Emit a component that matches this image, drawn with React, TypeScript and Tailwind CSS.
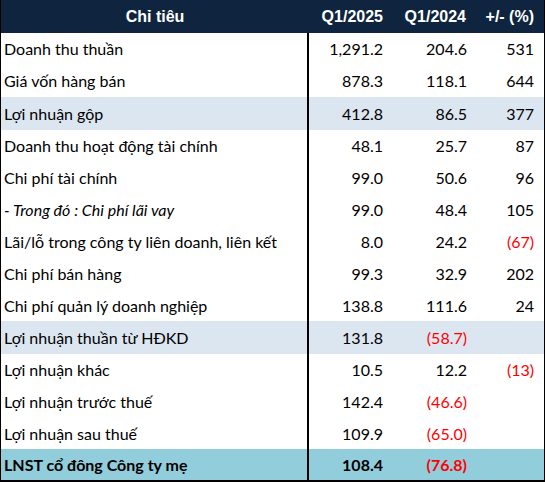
type Row = {
  label: string;
  q25: string;
  q24: string;
  pct: string;
  h: string;
  tone?: "band" | "total";
  italic?: boolean;
};

const rows: Row[] = [
  { label: "Doanh thu thuần", q25: "1,291.2", q24: "204.6", pct: "531", h: "h-[32px]" },
  { label: "Giá vốn hàng bán", q25: "878.3", q24: "118.1", pct: "644", h: "h-[32px]" },
  { label: "Lợi nhuận gộp", q25: "412.8", q24: "86.5", pct: "377", h: "h-[33px]", tone: "band" },
  { label: "Doanh thu hoạt động tài chính", q25: "48.1", q24: "25.7", pct: "87", h: "h-[32px]" },
  { label: "Chi phí tài chính", q25: "99.0", q24: "50.6", pct: "96", h: "h-[32px]" },
  { label: "- Trong đó : Chi phí lãi vay", q25: "99.0", q24: "48.4", pct: "105", h: "h-[32px]", italic: true },
  { label: "Lãi/lỗ trong công ty liên doanh, liên kết", q25: "8.0", q24: "24.2", pct: "(67)", h: "h-[32px]" },
  { label: "Chi phí bán hàng", q25: "99.3", q24: "32.9", pct: "202", h: "h-[32px]" },
  { label: "Chi phí quản lý doanh nghiệp", q25: "138.8", q24: "111.6", pct: "24", h: "h-[31px]" },
  { label: "Lợi nhuận thuần từ HĐKD", q25: "131.8", q24: "(58.7)", pct: "", h: "h-[33px]", tone: "band" },
  { label: "Lợi nhuận khác", q25: "10.5", q24: "12.2", pct: "(13)", h: "h-[32px]" },
  { label: "Lợi nhuận trước thuế", q25: "142.4", q24: "(46.6)", pct: "", h: "h-[32px]" },
  { label: "Lợi nhuận sau thuế", q25: "109.9", q24: "(65.0)", pct: "", h: "h-[31px]" },
  { label: "LNST cổ đông Công ty mẹ", q25: "108.4", q24: "(76.8)", pct: "", h: "h-[31px]", tone: "total" },
];

const neg = (v: string) => (v.startsWith("(") ? "text-[#ff0000]" : "text-black");

export default function App() {
  return (
    <div className="w-[545px] border-x border-b-2 border-black bg-white font-['Lato',sans-serif] text-[16px] text-black">
      <div className="flex h-[33px] items-center bg-[#0f243e] font-['Liberation_Sans',Arial,sans-serif] text-[16px] font-bold text-white">
        <div className="w-[308px] text-center">Chỉ tiêu</div>
        <div className="w-[82px] pr-[8px] text-right">Q1/2025</div>
        <div className="w-[83px] pr-[8px] text-right">Q1/2024</div>
        <div className="flex-1 pr-[10px] text-right">+/- (%)</div>
      </div>

      {rows.map((r) => (
        <div
          key={r.label}
          className={[
            "flex items-center",
            r.h,
            r.tone === "band" ? "bg-[#dce6f1]" : r.tone === "total" ? "bg-[#92cddc] font-bold" : "",
          ].join(" ")}
        >
          <div className={"flex h-full w-[308px] items-center border-r-2 border-black pl-[3px] " + (r.italic ? "italic" : "")}>
            {r.label}
          </div>
          <div className="w-[82px] pr-[8px] text-right">{r.q25}</div>
          <div className={"w-[83px] pr-[7px] text-right " + neg(r.q24)}>{r.q24}</div>
          <div className={"flex-1 pr-[10px] text-right " + neg(r.pct)}>{r.pct}</div>
        </div>
      ))}
    </div>
  );
}
